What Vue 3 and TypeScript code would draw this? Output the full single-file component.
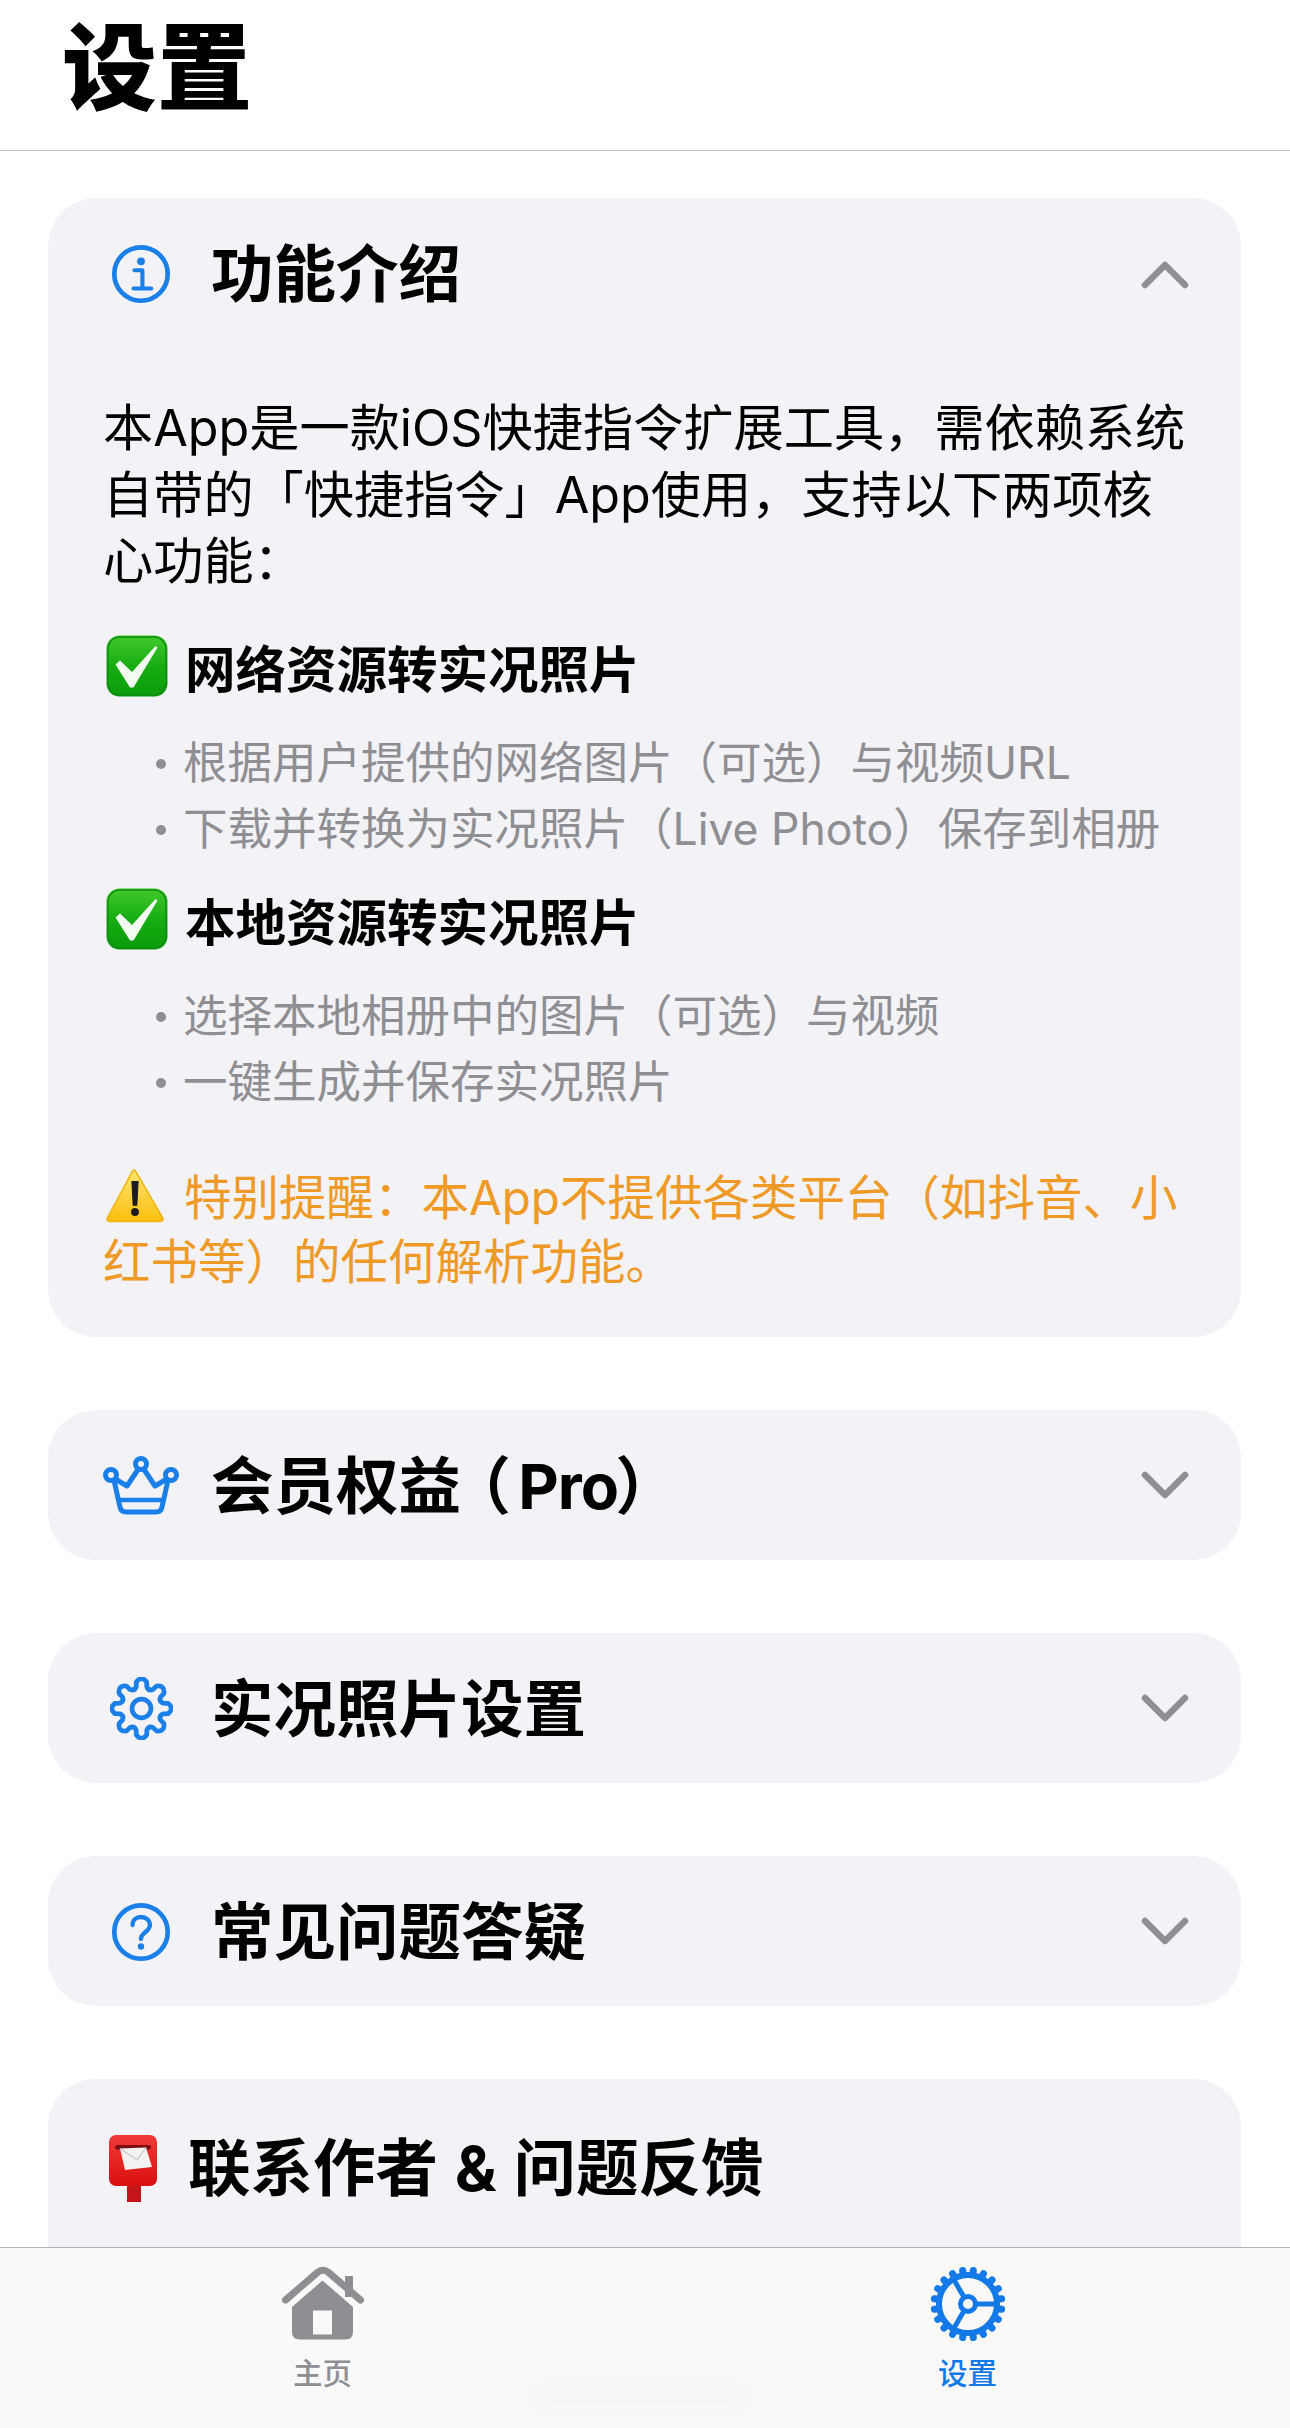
<template>
  <div class="page">
    <header class="top">
      <h1>设置</h1>
    </header>

    <main class="content">
      <section class="card">
        <div class="card-head">
          <svg class="head-icon" viewBox="0 0 64 64">
            <circle cx="32" cy="32" r="28.5" fill="none" stroke="#1b7fe9" stroke-width="5" />
            <circle cx="32" cy="18.5" r="4.2" fill="#1b7fe9" />
            <path d="M25 28h8.5v19M24 47.5h19" fill="none" stroke="#1b7fe9" stroke-width="4.4" stroke-linecap="round" stroke-linejoin="round" />
          </svg>
          <h2>功能介绍</h2>
          <svg class="chevron" viewBox="0 0 48 30">
            <path d="M4 26 24 6l20 20" fill="none" stroke="#8e8e93" stroke-width="6.5" stroke-linecap="round" stroke-linejoin="round" />
          </svg>
        </div>
        <div class="card-body">
          <p class="intro">本App是一款iOS快捷指令扩展工具，需依赖系统自带的「快捷指令」App使用，支持以下两项核心功能：</p>

          <template v-for="group in groups" :key="group.title">
            <div class="sub">
              <svg class="check" viewBox="0 0 62 62">
                <defs>
                  <linearGradient id="checkFill" x1="0" y1="0" x2="0" y2="1">
                    <stop offset="0" stop-color="#43c92c" />
                    <stop offset="0.5" stop-color="#16ad12" />
                    <stop offset="1" stop-color="#0a9b0a" />
                  </linearGradient>
                </defs>
                <rect x="0.5" y="0.5" width="61" height="61" rx="13" fill="url(#checkFill)" />
                <rect x="2" y="2" width="58" height="58" rx="12" fill="none" stroke="#0d8d0e" stroke-width="1.5" />
                <path d="M9.5 29.5 14 25.5 26 37 49.5 11 51.5 12.5 27.5 52.5 24 52.5Z" fill="#f4fff2" />
              </svg>
              <span>{{ group.title }}</span>
            </div>
            <ul>
              <li v-for="line in group.lines" :key="line">{{ line }}</li>
            </ul>
          </template>

          <p class="warn">
            <svg class="warn-icon" viewBox="0 0 60 54">
              <defs>
                <linearGradient id="warnFill" x1="0" y1="0" x2="0" y2="1">
                  <stop offset="0" stop-color="#ffe670" />
                  <stop offset="1" stop-color="#f9bf10" />
                </linearGradient>
              </defs>
              <path d="M30 3 57 49.5Q58 52 55 52.5H5Q2 52 3 49.5L27 5Q29 2 30 3Z" fill="url(#warnFill)" stroke="#f0b512" stroke-width="1.5" stroke-linejoin="round" />
              <path d="M27 14h6l-1.2 23h-3.6Z" fill="#1c1c1c" stroke="#1c1c1c" stroke-linejoin="round" />
              <circle cx="30" cy="43.5" r="3.8" fill="#1c1c1c" />
            </svg>特别提醒：本App不提供各类平台（如抖音、小红书等）的任何解析功能。
          </p>
        </div>
      </section>

      <section class="card">
        <div class="card-head">
          <svg class="head-icon crown" viewBox="0 0 76 60">
            <path d="M10.5 22 17 51Q18 56 23 56H53Q58 56 59 51L65.5 22 52 30 38 9 24 30Z" fill="none" stroke="#1b7fe9" stroke-width="5" stroke-linejoin="round" />
            <path d="M15 44H61" stroke="#1b7fe9" stroke-width="4.5" />
            <circle cx="8" cy="19" r="5.5" fill="#f2f2f7" stroke="#1b7fe9" stroke-width="5" />
            <circle cx="38" cy="8" r="5.5" fill="#f2f2f7" stroke="#1b7fe9" stroke-width="5" />
            <circle cx="68" cy="19" r="5.5" fill="#f2f2f7" stroke="#1b7fe9" stroke-width="5" />
          </svg>
          <h2>会员权益<span class="paren open">（</span><span class="pro">Pro</span><span class="paren">）</span></h2>
          <svg class="chevron" viewBox="0 0 48 30">
            <path d="M4 4 24 24 44 4" fill="none" stroke="#8e8e93" stroke-width="6.5" stroke-linecap="round" stroke-linejoin="round" />
          </svg>
        </div>
      </section>

      <section class="card">
        <div class="card-head">
          <svg class="head-icon gear" viewBox="0 0 64 64">
            <path :d="smallGear" fill="none" stroke="#1b7fe9" stroke-width="4.8" stroke-linejoin="round" />
            <circle cx="32" cy="32" r="9.6" fill="none" stroke="#1b7fe9" stroke-width="4.8" />
          </svg>
          <h2>实况照片设置</h2>
          <svg class="chevron" viewBox="0 0 48 30">
            <path d="M4 4 24 24 44 4" fill="none" stroke="#8e8e93" stroke-width="6.5" stroke-linecap="round" stroke-linejoin="round" />
          </svg>
        </div>
      </section>

      <section class="card">
        <div class="card-head">
          <svg class="head-icon" viewBox="0 0 64 64">
            <circle cx="32" cy="32" r="28.5" fill="none" stroke="#1b7fe9" stroke-width="5" />
            <path d="M23 24.5C23 19 27 16 32 16s9.5 3.2 9.5 8.5c0 7.5-9.5 7.5-9.5 15" fill="none" stroke="#1b7fe9" stroke-width="4.6" stroke-linecap="round" />
            <circle cx="32" cy="47.5" r="3.4" fill="#1b7fe9" />
          </svg>
          <h2>常见问题答疑</h2>
          <svg class="chevron" viewBox="0 0 48 30">
            <path d="M4 4 24 24 44 4" fill="none" stroke="#8e8e93" stroke-width="6.5" stroke-linecap="round" stroke-linejoin="round" />
          </svg>
        </div>
      </section>

      <section class="card last">
        <div class="card-head contact">
          <svg class="postbox" viewBox="0 0 52 68">
            <defs>
              <linearGradient id="boxFill" x1="0" y1="0" x2="0" y2="1">
                <stop offset="0" stop-color="#ee3a38" />
                <stop offset="1" stop-color="#d9100f" />
              </linearGradient>
            </defs>
            <rect x="19" y="50" width="14" height="18" fill="#c4161a" />
            <rect x="1" y="1" width="48" height="51" rx="7" fill="url(#boxFill)" />
            <rect x="7" y="11" width="36" height="4.5" rx="2.2" fill="#7d0d10" />
            <path d="M12 14.5 38 13.5 44 33 17 36Z" fill="#f4f2f0" />
            <path d="M12 14.5 29 26 38 13.5" fill="none" stroke="#c9c6c4" stroke-width="1.2" />
          </svg>
          <h2>联系作者 &amp; 问题反馈</h2>
        </div>
      </section>
    </main>

    <nav class="tabbar">
      <div class="tab">
        <svg class="tab-icon" viewBox="0 0 84 76">
          <path d="M64 11a1 1 0 0 1 1-1h6a1 1 0 0 1 1 1v20h-8Z" fill="#8e8e93" />
          <path d="M4.5 34 37 6Q42 2.5 47 6L79.5 34" fill="none" stroke="#8e8e93" stroke-width="7" stroke-linecap="round" stroke-linejoin="round" />
          <path fill-rule="evenodd" d="M41.5 14.5 72 41V66Q72 73.5 64 73.5H19Q11 73.5 11 66V41ZM32 44.5V68.5H51V44.5Z" fill="#8e8e93" />
        </svg>
        <span>主页</span>
      </div>
      <div class="tab active">
        <svg class="tab-icon" viewBox="0 0 76 76">
          <path v-for="tooth in teeth" :key="tooth" :d="tooth" stroke="#1479e8" stroke-width="7" stroke-linecap="round" />
          <circle cx="38" cy="38" r="29" fill="none" stroke="#1479e8" stroke-width="6" />
          <path d="M38 38H66M38 38 24 14M38 38 24 62" stroke="#1479e8" stroke-width="5" />
          <circle cx="38" cy="38" r="7.5" fill="#fafafa" stroke="#1479e8" stroke-width="5" />
        </svg>
        <span>设置</span>
      </div>
      <div class="smudge"></div>
    </nav>
  </div>
</template>

<script setup lang="ts">
interface Group {
  title: string;
  lines: string[];
}

const groups: Group[] = [
  {
    title: "网络资源转实况照片",
    lines: [
      "根据用户提供的网络图片（可选）与视频URL",
      "下载并转换为实况照片（Live Photo）保存到相册",
    ],
  },
  {
    title: "本地资源转实况照片",
    lines: ["选择本地相册中的图片（可选）与视频", "一键生成并保存实况照片"],
  },
];

const polar = (r: number, deg: number) => {
  const a = (deg * Math.PI) / 180;
  return `${(38 + r * Math.cos(a)).toFixed(2)} ${(38 + r * Math.sin(a)).toFixed(2)}`;
};

// tab bar gear: 20 short rounded teeth round the ring
const teeth = Array.from({ length: 20 }, (_, i) => {
  const deg = i * 18 + 9;
  return `M${polar(30, deg)}L${polar(34, deg)}`;
});

// outline of the 8 tooth gear in the section header
const gearPoint = (r: number, deg: number) => {
  const a = (deg * Math.PI) / 180;
  return `${(32 + r * Math.cos(a)).toFixed(2)} ${(32 + r * Math.sin(a)).toFixed(2)}`;
};
const smallGear =
  Array.from({ length: 8 }, (_, i) => {
    const c = i * 45 - 90;
    return [
      `${i === 0 ? "M" : "L"}${gearPoint(22.5, c - 14)}`,
      `L${gearPoint(27.5, c - 11)}`,
      `Q${gearPoint(33.5, c)} ${gearPoint(27.5, c + 11)}`,
      `L${gearPoint(22.5, c + 14)}`,
      `Q${gearPoint(19, c + 22.5)} ${gearPoint(22.5, c + 31)}`,
    ].join("");
  }).join("") + "Z";
</script>

<style>
html,
body {
  margin: 0;
  background: #ffffff;
}
</style>

<style scoped>
.page {
  width: 1290px;
  height: 2428px;
  display: flex;
  flex-direction: column;
  overflow: hidden;
  background: #ffffff;
  color: #000000;
  font-family: Inter, "Noto Sans CJK SC", sans-serif;
}

.top {
  flex: none;
  height: 150px;
  padding-left: 62px;
  border-bottom: 1.5px solid #c3c3c5;
}
.top h1 {
  margin: 0;
  font-size: 95px;
  line-height: 138px;
  font-weight: 900;
}

.content {
  flex: 1;
  min-height: 0;
  overflow: hidden;
  padding: 47px 49px 0 48px;
  display: flex;
  flex-direction: column;
  gap: 73px;
}

.card {
  flex: none;
  background: #f2f2f7;
  border-radius: 48px;
}
.last {
  padding-bottom: 80px;
}

.card-head {
  box-sizing: border-box;
  height: 150px;
  display: flex;
  align-items: center;
  padding: 2px 52px 0 63px;
}
.card-head h2 {
  flex: 1;
  margin: 0 0 0 40px;
  font-size: 62.5px;
  line-height: 80px;
  font-weight: 700;
}
.paren {
  font-feature-settings: "palt";
}
.open {
  margin: 0 10px 0 16px;
}
.pro {
  letter-spacing: -1px;
}
.head-icon {
  flex: none;
  width: 60px;
  height: 60px;
}
.crown {
  width: 76px;
  margin: 0 -8px;
}
.gear {
  width: 63px;
  height: 63px;
  margin: 0 -1.5px;
}
.chevron {
  flex: none;
  width: 48px;
  height: 30px;
}

.contact {
  height: 176px;
  padding-left: 60px;
}
.contact h2 {
  margin-left: 28px;
  word-spacing: 2px;
}
.postbox {
  flex: none;
  width: 52px;
  height: 68px;
}

.card-body {
  padding: 47px 50px 43px 55px;
}
.intro {
  margin: 0;
  font-size: 50.2px;
  line-height: 66.5px;
}

.sub {
  display: flex;
  align-items: center;
  gap: 17px;
  margin: 38px 0 31px 3px;
  height: 66px;
  font-size: 50.5px;
  font-weight: 700;
}
ul + .sub {
  margin-top: 24px;
}
.check {
  flex: none;
  width: 62px;
  height: 62px;
}

ul {
  list-style: none;
  margin: 0;
  padding: 0 0 0 80px;
}
li {
  position: relative;
  font-size: 44.5px;
  line-height: 66px;
  color: #8e8e93;
  white-space: nowrap;
}
li::before {
  content: "";
  position: absolute;
  left: -27px;
  top: 29px;
  width: 10px;
  height: 10px;
  border-radius: 50%;
  background: #8e8e93;
}

.warn {
  margin: 51px 0 0;
  font-size: 47.5px;
  line-height: 64px;
  color: #ef9a27;
}
.warn-icon {
  width: 62px;
  height: 56px;
  margin: -10px 18px -10px 1px;
  vertical-align: 2px;
}

.tabbar {
  flex: none;
  position: relative;
  height: 180px;
  display: grid;
  grid-template-columns: 1fr 1fr;
  background: #f9f9f9;
  border-top: 1.5px solid #b4b4b6;
}
.tab {
  display: flex;
  flex-direction: column;
  align-items: center;
  padding-top: 18px;
  font-size: 29.5px;
  line-height: 40px;
  font-weight: 500;
  color: #8e8e93;
}
.tab span {
  margin-top: 11px;
}
.tab-icon {
  display: block;
  width: 84px;
  height: 76px;
}
.active {
  color: #1479e8;
}
.smudge {
  position: absolute;
  left: 530px;
  top: 140px;
  width: 220px;
  height: 18px;
  border-radius: 9px;
  background: #f6f6f6;
  filter: blur(6px);
}
</style>
